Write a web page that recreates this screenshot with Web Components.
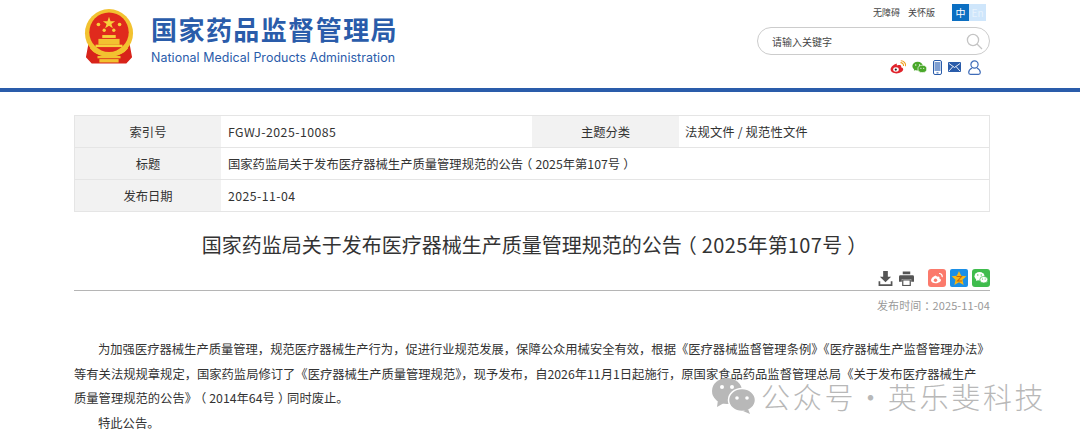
<!DOCTYPE html>
<html lang="zh">
<head>
<meta charset="utf-8">
<title>国家药监局关于发布医疗器械生产质量管理规范的公告</title>
<style>
  html, body { margin: 0; height: 440px; overflow: hidden; background: #fff; }
  body { font-family: "Noto Sans CJK SC", "Noto Sans", sans-serif; color: #333; position: relative; }
</style>
</head>
<body>
<site-header></site-header>
<main-wrap>
  <meta-table></meta-table>
  <article-head></article-head>
  <article-body></article-body>
</main-wrap>
<mp-watermark></mp-watermark>

<script>
const FONT = `"Noto Sans CJK SC", "Noto Sans", sans-serif`;

// centred full-width punctuation, the way the original font sets it
const PUNCT = `.pn { font-feature-settings: "halt"; padding: 0 .25em; }`;

class SiteHeader extends HTMLElement {
  constructor() {
    super();
    this.attachShadow({ mode: "open" });
  }

  connectedCallback() {
    this.shadowRoot.innerHTML = /* html */`
    <style>
      :host { display: block; height: 88px; border-bottom: 4px solid #2a5caa; font-family: ${FONT}; }
      .inner { width: 916px; height: 88px; margin-left: 74px; display: flex; justify-content: space-between; }
      .brand { display: flex; align-items: flex-start; gap: 17px; padding: 9px 0 0 10px; }
      .names { display: flex; flex-direction: column; padding-top: 1px; }
      .cn { font-size: 26px; line-height: 38px; font-weight: 700; color: #2a5caa; letter-spacing: 1.45px; white-space: nowrap; }
      .en { font: 12.4px/16px Inter, "Noto Sans", sans-serif; color: #2a5caa; margin-top: 2px; white-space: nowrap; letter-spacing: .07px; }
      .tools { display: flex; flex-direction: column; align-items: flex-end; }
      .top { display: flex; align-items: center; height: 17px; margin-top: 4px; font-size: 9px; color: #444; padding-right: 4px; }
      .top span { margin-right: 8px; }
      .top span + span { margin-right: 17px; }
      .lang { display: flex; width: 34px; height: 17px; font-size: 10px; line-height: 17px; text-align: center; }
      .lang b { flex: 1; font-weight: 400; background: #0b6fc2; color: #fff; }
      .lang i { flex: 1; font-style: normal; background: #cfe6fb; color: #e8f3fd; }
      .search { box-sizing: border-box; width: 233px; height: 28px; margin-top: 6px; border: 1px solid #ccc; border-radius: 14px;
        display: flex; align-items: center; justify-content: space-between; padding: 0 6px 0 14px; font-size: 10px; color: #444; }
      .icons { display: flex; align-items: center; gap: 6px; height: 20px; margin-top: 2px; padding-right: 9px; }
      svg { display: block; }
    </style>
    <div class="inner">
      <div class="brand">
        <svg width="50" height="55" viewBox="0 0 52 57">
          <path d="M5 34L2 50l6 6.500h36L50 50l-3-16q-7 13-21 13T5 34z" fill="#d8231a"/>
          <circle cx="26" cy="25" r="25" fill="#f2c230"/>
          <circle cx="26" cy="24" r="20.500" fill="#e02a1d"/>
          <polygon points="26,8 27.600,12.600 32.400,12.600 28.500,15.500 30,20 26,17.300 22,20 23.500,15.500 19.600,12.600 24.400,12.600" fill="#f7d23c"/>
          <circle cx="15" cy="16" r="1.900" fill="#f7d23c"/><circle cx="37" cy="16" r="1.900" fill="#f7d23c"/>
          <circle cx="21" cy="22" r="1.700" fill="#f7d23c"/><circle cx="31" cy="22" r="1.700" fill="#f7d23c"/>
          <rect x="19" y="27" width="14" height="3" fill="#f7d23c"/>
          <rect x="15" y="31" width="22" height="6" fill="#f2c230"/>
          <rect x="12" y="37" width="28" height="2.500" fill="#f7d23c"/>
          <path d="M7 40q6 8 19 8t19-8" fill="none" stroke="#f2c230" stroke-width="2.400"/>
          <path d="M14 50h24" stroke="#f2c230" stroke-width="2.400"/>
          <rect x="16" y="52" width="20" height="3.500" fill="#f2c230"/>
        </svg>
        <div class="names">
          <div class="cn">国家药品监督管理局</div>
          <div class="en">National Medical Products Administration</div>
        </div>
      </div>
      <div class="tools">
        <div class="top"><span>无障碍</span><span>关怀版</span>
          <div class="lang"><b>中</b><i>En</i></div>
        </div>
        <div class="search">请输入关键字
          <svg width="17" height="17" viewBox="0 0 17 17" fill="none" stroke="#c4c4c4" stroke-width="1.300"><circle cx="7" cy="7" r="5.600"/><path d="M11 11l5 5"/></svg>
        </div>
        <div class="icons">
          <svg width="16" height="14" viewBox="0 0 16 14"><path d="M6.800 3.600C3.400 4.600.6 7.200.6 9.600c0 2.300 2.800 3.800 5.800 3.800 3.800 0 6.800-2.100 6.800-4.100 0-1.500-1.500-1.900-2.100-2.100.6-1.700-.4-2.800-2.600-2.100-.5.100-1.100.3-1.700.5z" fill="#e0232b"/><ellipse cx="6" cy="9.500" rx="2.800" ry="2.200" fill="#fff"/><circle cx="5.800" cy="9.600" r="1.100" fill="#222"/><path d="M10.500 2.600a3 3 0 0 1 3 3.400M10.800.8a4.800 4.800 0 0 1 4.800 5.400" fill="none" stroke="#f0a020" stroke-width="1.100"/></svg>
          <svg width="15" height="13" viewBox="0 0 16 13"><ellipse cx="6" cy="5" rx="5.600" ry="4.700" fill="#4aa82a"/><path d="M2.500 8l-.5 2 2.300-1z" fill="#4aa82a"/><ellipse cx="11" cy="8" rx="4.700" ry="3.900" fill="#4aa82a" stroke="#fff" stroke-width=".7"/><circle cx="4" cy="3.800" r=".7" fill="#fff"/><circle cx="8" cy="3.800" r=".7" fill="#fff"/><circle cx="9.500" cy="7.400" r=".6" fill="#fff"/><circle cx="12.500" cy="7.400" r=".6" fill="#fff"/></svg>
          <svg width="9" height="15" viewBox="0 0 9 15"><rect x=".5" y=".5" width="8" height="14" rx="1.500" fill="#fff" stroke="#2a5caa"/><rect x="1.500" y="2" width="6" height="9" fill="#7f9fd2"/><rect x="3.500" y="12.400" width="2" height="1" fill="#2a5caa"/></svg>
          <svg width="13" height="10" viewBox="0 0 13 10"><rect width="13" height="10" rx="1" fill="#2a5caa"/><path d="M1 1.500l5.500 4 5.500-4M1 9l4-4.500M12 9L8 4.500" fill="none" stroke="#fff" stroke-width=".9"/></svg>
          <svg width="13" height="15" viewBox="0 0 13 15" fill="none" stroke="#3f6cb8" stroke-width="1.200" style="margin-left:1px"><circle cx="6.500" cy="4.500" r="3.600"/><path d="M4 8C2 9 .7 10.800.7 12.500q0 1.800 1.800 1.800h8q1.800 0 1.800-1.800C12.300 10.800 11 9 9 8"/></svg>
        </div>
      </div>
    </div>`;
  }
}

class MainWrap extends HTMLElement {
  constructor() {
    super();
    this.attachShadow({ mode: "open" }).innerHTML = /* html */`
    <style>
      :host { display: block; box-sizing: border-box; width: 916px; margin-left: 74px; padding-top: 23px; }
    </style>
    <slot></slot>`;
  }
}

class MetaTable extends HTMLElement {
  constructor() {
    super();
    this.attachShadow({ mode: "open" });
  }

  connectedCallback() {
    this.shadowRoot.innerHTML = /* html */`
    <style>
      ${PUNCT}
      :host { display: block; font-family: ${FONT}; font-size: 12.3px; color: #333; }
      .grid { display: grid; grid-template-columns: 146px 311px 147px 1fr; grid-auto-rows: 31px;
        border: 1px solid #e5e5e5; background: #e5e5e5; row-gap: 1px; }
      .k, .v { display: flex; align-items: center; background: #fff; white-space: nowrap; }
      .k { background: #f2f2f2; justify-content: center; }
      .v { padding-left: 7px; }
      .wide { grid-column: 2 / -1; }
      .n { letter-spacing: .45px; }
      .t { padding-left: 6px; letter-spacing: .15px; }
    </style>
    <div class="grid">
      <div class="k">索引号</div><div class="v n">FGWJ-2025-10085</div>
      <div class="k">主题分类</div><div class="v t">法规文件 / 规范性文件</div>
      <div class="k">标题</div><div class="v wide"><span>国家药监局关于发布医疗器械生产质量管理规范的公告<span class="pn">（</span>2025年第107号<span class="pn">）</span></span></div>
      <div class="k">发布日期</div><div class="v wide n">2025-11-04</div>
    </div>`;
  }
}

class ArticleHead extends HTMLElement {
  constructor() {
    super();
    this.attachShadow({ mode: "open" });
  }

  connectedCallback() {
    this.shadowRoot.innerHTML = /* html */`
    <style>
      ${PUNCT}
      :host { display: block; font-family: ${FONT}; }
      h1 { margin: 0; padding-top: 17px; font-size: 20px; line-height: 32px; font-weight: 400; color: #333; text-align: center; white-space: nowrap; }
      .n { letter-spacing: .4px; }
      .share { display: flex; justify-content: flex-end; align-items: center; height: 20px; margin-top: 7px; }
      .share svg { display: block; }
      .rule { height: 1px; background: #b5b5b5; margin-top: 2px; }
      .date { text-align: right; font-size: 11px; line-height: 16px; color: #999; margin-top: 6px; letter-spacing: .1px; }
    </style>
    <h1>国家药监局关于发布医疗器械生产质量管理规范的公告<span class="pn">（</span><span class="n">2025</span>年第<span class="n">107</span>号<span class="pn">）</span></h1>
    <div class="share">
      <svg width="15" height="15" viewBox="0 0 15 16" style="margin-right:6px"><path d="M5 0h5v6h3.500L7.500 12 1.500 6H5z" fill="#555"/><path d="M1 11v4h13v-4" fill="none" stroke="#555" stroke-width="1.800"/></svg>
      <svg width="15" height="15" viewBox="0 0 16 15" style="margin-right:14px"><path d="M4 0h8v3H4zM1.500 4h13A1.500 1.500 0 0 1 16 5.500V11h-3V8H3v3H0V5.500A1.500 1.500 0 0 1 1.500 4z" fill="#555"/><rect x="4" y="9" width="8" height="6" fill="none" stroke="#555" stroke-width="1.300"/></svg>
      <svg width="18" height="18" viewBox="0 0 18 18"><rect width="18" height="18" rx="3" fill="#fb7a6c"/><path d="M7.500 6.500C5 7.500 3 9.500 3 11.200c0 1.800 2.200 3 4.600 3 3 0 5.400-1.600 5.400-3.200 0-1.100-1.100-1.500-1.600-1.600.5-1.400-.4-2.300-2-1.700z" fill="#fff"/><circle cx="7.500" cy="11.300" r="1.700" fill="#fb7a6c"/><path d="M11 4.500a3 3 0 0 1 3.200 3.600" fill="none" stroke="#fff" stroke-width="1.200"/></svg>
      <svg width="18" height="18" viewBox="0 0 18 18" style="margin-left:4px"><rect width="18" height="18" rx="2" fill="#1b8fe6"/><polygon points="9,2 11.200,6.800 16.400,7.300 12.500,10.800 13.600,16 9,13.300 4.400,16 5.500,10.800 1.600,7.300 6.800,6.800" fill="#f7b614"/><path d="M6.500 7.500h5l-4 4.500h4.500" fill="none" stroke="#c9660c" stroke-width="1.100"/></svg>
      <svg width="18" height="18" viewBox="0 0 18 18" style="margin-left:4px"><rect width="18" height="18" rx="3" fill="#3fbc4d"/><ellipse cx="7.500" cy="7.300" rx="5" ry="4.200" fill="#fff"/><path d="M4.500 10l-.5 2 2.200-1z" fill="#fff"/><ellipse cx="11.800" cy="10.700" rx="4" ry="3.300" fill="#fff" stroke="#3fbc4d" stroke-width=".7"/><circle cx="5.800" cy="6" r=".7" fill="#3fbc4d"/><circle cx="9.200" cy="6" r=".7" fill="#3fbc4d"/><circle cx="10.500" cy="10" r=".6" fill="#3fbc4d"/><circle cx="13.200" cy="10" r=".6" fill="#3fbc4d"/></svg>
    </div>
    <div class="rule"></div>
    <div class="date">发布时间<span class="pn">：</span>2025-11-04</div>`;
  }
}

class ArticleBody extends HTMLElement {
  constructor() {
    super();
    this.attachShadow({ mode: "open" });
  }

  connectedCallback() {
    this.shadowRoot.innerHTML = /* html */`
    <style>
      ${PUNCT}
      :host { display: block; font-family: ${FONT}; font-size: 12.3px; line-height: 24.6px; color: #333; margin-top: 24px; }
      p { margin: 0; text-indent: 24px; white-space: nowrap; }
    </style>
    <p>为加强医疗器械生产质量管理，规范医疗器械生产行为，促进行业规范发展，保障公众用械安全有效，根据《医疗器械监督管理条例》《医疗器械生产监督管理办法》<br>等有关法规规章规定，国家药监局修订了《医疗器械生产质量管理规范》，现予发布，自2026年11月1日起施行，原国家食品药品监督管理总局《关于发布医疗器械生产<br>质量管理规范的公告》<span class="pn">（</span>2014年64号<span class="pn">）</span>同时废止。</p>
    <p>特此公告。</p>`;
  }
}

class MpWatermark extends HTMLElement {
  constructor() {
    super();
    this.attachShadow({ mode: "open" }).innerHTML = /* html */`
    <style>
      :host { position: absolute; left: 712px; top: 378px; display: flex; align-items: flex-start; font-family: ${FONT}; }
      svg { display: block; margin-right: 5px; }
      span { margin-top: 4px; font-size: 29px; line-height: 29px; font-weight: 300; color: #b8b8b8; letter-spacing: 2.7px; white-space: nowrap; }
    </style>
    <svg width="44" height="36" viewBox="0 0 44 36">
      <ellipse cx="15" cy="13" rx="15" ry="13" fill="#b8b8b8"/>
      <path d="M6 22l-1 7 7-4z" fill="#b8b8b8"/>
      <ellipse cx="30" cy="22" rx="13.500" ry="11.500" fill="#b8b8b8" stroke="#fff" stroke-width="1.500"/>
      <path d="M36 31l2 5-7-3z" fill="#b8b8b8"/>
      <circle cx="10" cy="9" r="2" fill="#fff"/><circle cx="20" cy="9" r="2" fill="#fff"/>
      <circle cx="25" cy="20" r="1.800" fill="#fff"/><circle cx="35" cy="20" r="1.800" fill="#fff"/>
    </svg>
    <span>公众号·英乐斐科技</span>`;
  }
}

customElements.define("site-header", SiteHeader);
customElements.define("main-wrap", MainWrap);
customElements.define("meta-table", MetaTable);
customElements.define("article-head", ArticleHead);
customElements.define("article-body", ArticleBody);
customElements.define("mp-watermark", MpWatermark);
</script>
</body>
</html>
